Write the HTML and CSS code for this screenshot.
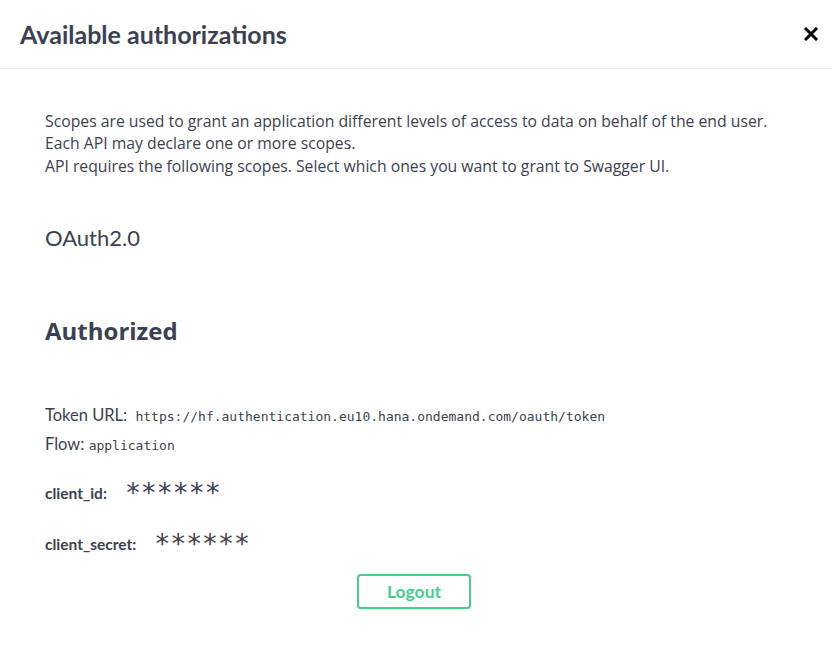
FILE: index.html
```html
<!DOCTYPE html>
<html lang="en">
<head>
<meta charset="utf-8">
<title>Available authorizations</title>
<link rel="stylesheet" href="styles.css">
</head>
<body>
<div class="modal">
  <header class="modal-header">
    <h3 class="modal-title">Available authorizations</h3>
    <button class="close-btn" type="button" aria-label="Close">
      <svg width="14" height="14" viewBox="0 0 14 14"><path d="M2 2 L12 12 M12 2 L2 12" stroke="#000" stroke-width="3" stroke-linecap="square"/></svg>
    </button>
  </header>
  <div class="modal-content">
    <p class="desc">Scopes are used to grant an application different levels of access to data on behalf of the end user. Each API may declare one or more scopes.</p>
    <p class="desc">API requires the following scopes. Select which ones you want to grant to Swagger UI.</p>
    <h4 class="scheme-name">OAuth2.0</h4>
    <h2 class="authorized">Authorized</h2>
    <p class="meta">Token URL: <code>https://hf.authentication.eu10.hana.ondemand.com/oauth/token</code></p>
    <p class="meta">Flow: <code>application</code></p>
    <div class="field"><label class="field-label">client_id:</label><span class="masked">******</span></div>
    <div class="field"><label class="field-label">client_secret:</label><span class="masked">******</span></div>
    <div class="actions"><button class="logout-btn" type="button">Logout</button></div>
  </div>
</div>
</body>
</html>
```
FILE: styles.css
```css
html, body {
  margin: 0;
  padding: 0;
  background: #fff;
}
body {
  font-family: "Open Sans", sans-serif;
  color: #3b4151;
}
.modal {
  width: 832px;
  height: 652px;
}
.modal-header {
  display: flex;
  align-items: center;
  justify-content: space-between;
  height: 69px;
  padding: 0 14px 0 20px;
  border-bottom: 1px solid #ebebeb;
  box-sizing: border-box;
}
.modal-title {
  margin: 0;
  font-family: "Lato", sans-serif;
  font-weight: 700;
  font-size: 25px;
  color: #3b4151;
}
.close-btn {
  border: 0;
  background: none;
  padding: 0;
  width: 14px;
  height: 14px;
  display: flex;
}
.modal-content {
  padding: 41px 60px 0 45px;
}
.desc {
  margin: 0 0 1px 0;
  font-size: 15.75px;
  line-height: 22px;
  color: #3b4151;
}
.scheme-name {
  margin: 46px 0 0 0;
  font-family: "Lato", sans-serif;
  font-weight: 400;
  font-size: 22px;
  line-height: 30px;
}
.authorized {
  margin: 62px 0 0 0;
  font-family: "Open Sans", sans-serif;
  font-weight: 700;
  font-size: 24px;
  line-height: 32px;
}
.meta {
  margin: 54px 0 0 0;
  height: 28px;
  font-family: "Lato", sans-serif;
  font-size: 16.5px;
  line-height: 28px;
}
.meta + .meta {
  margin-top: 1px;
}
.meta code {
  font-family: "DejaVu Sans Mono", monospace;
  font-size: 13px;
  line-height: 1;
  margin-left: 4px;
}
.meta + .meta code {
  margin-left: 0;
}
.field {
  display: flex;
  align-items: baseline;
  margin-top: 16px;
  height: 30px;
}
.field + .field {
  margin-top: 21px;
}
.field-label {
  font-family: "Lato", sans-serif;
  font-weight: 700;
  font-size: 15.5px;
  margin-right: 18px;
}
.masked {
  font-family: "DejaVu Sans Mono", monospace;
  font-size: 26.5px;
  position: relative;
  top: 3px;
}
.actions {
  display: flex;
  justify-content: center;
  margin: 19px -11px 0 0;
}
.logout-btn {
  width: 114px;
  height: 35px;
  border: 2px solid #49cc90;
  border-radius: 4px;
  background: #fff;
  color: #49cc90;
  font-family: "Lato", sans-serif;
  font-weight: 700;
  font-size: 17.5px;
  box-shadow: 0 1px 2px rgba(0,0,0,0.1);
}
```
